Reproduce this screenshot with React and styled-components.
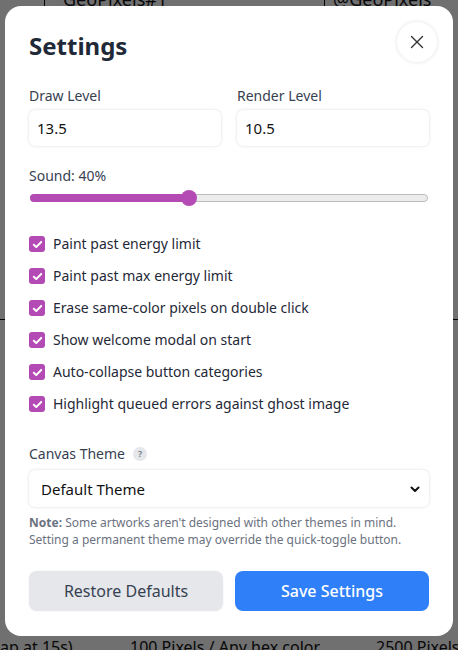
import React, { useState } from "react";
import styled, { createGlobalStyle } from "styled-components";

const GlobalStyle = createGlobalStyle`
*{
  box-sizing:border-box;
  margin:0;
  padding:0;
}
html, body{
  width:100%;
  height:100%;
  overflow:hidden;
  font-family:"Noto Sans", "Open Sans", sans-serif;
}
`

// dimmed page behind the modal
const Page = styled.div`
  width:458px;
  height:650px;
  background:#f3f3f3;
  display:flex;
  flex-direction:column;
  justify-content:space-between;
  color:#111;
`
const PageTop = styled.div`
  display:grid;
  grid-template-columns:45px 280px 1fr;
  height:320px;
  border-bottom:1px solid #000;
`
const PageCell = styled.div`
  border-right:${p => p.$last ? "none" : "1px solid #000"};
  font-size:18px;
  line-height:18px;
  margin-top:-10px;
  padding-left:${p => p.$pad || 10}px;
`
const Swatches = styled.div`
  display:flex;
  flex-direction:column;
  gap:3px;
  margin-top:118px;
`
const Swatch = styled.div`
  height:${p => p.$h}px;
  background:${p => p.$c};
  border:2px solid #1d4fa8;
  border-radius:0 6px 6px 0;
`
const PageBottom = styled.div`
  display:grid;
  grid-template-columns:130px 246px 1fr;
  font-size:16px;
  margin-bottom:-8px;
  white-space:nowrap;
  overflow:hidden;
`

const Overlay = styled.div`
  position:fixed;
  inset:0;
  background:rgba(0,0,0,0.54);
`

const Modal = styled.div`
  position:fixed;
  left:5px;
  top:6px;
  width:448px;
  height:630px;
  background:#fff;
  border-radius:16px;
  padding:24px 24px 25px;
  display:flex;
  flex-direction:column;
`
const Title = styled.h1`
  font-size:24px;
  line-height:32px;
  font-weight:700;
  color:#1f2937;
`
const CloseButton = styled.button`
  position:absolute;
  top:16px;
  right:16px;
  width:40px;
  height:40px;
  border-radius:50%;
  border:none;
  background:#fff;
  box-shadow:0 0 4px rgba(0,0,0,0.12);
  display:flex;
  align-items:center;
  justify-content:center;
  color:#333;
`
const FieldRow = styled.div`
  display:grid;
  grid-template-columns:minmax(0,1fr) minmax(0,1fr);
  gap:16px;
  margin-top:24px;
`
const Field = styled.div`
  display:flex;
  flex-direction:column;
  gap:4px;
  min-width:0;
`
const Label = styled.label`
  font-size:14px;
  line-height:20px;
  color:#374151;
  display:flex;
  align-items:center;
  gap:8px;
`
const Input = styled.input`
  width:100%;
  min-width:0;
  height:36px;
  border:none;
  border-radius:6px;
  box-shadow:0 0 3px rgba(0,0,0,0.15);
  padding:0 8px;
  font-family:inherit;
  font-size:15px;
  color:#111;
  outline:none;
`
const SoundBlock = styled.div`
  margin-top:20px;
  display:flex;
  flex-direction:column;
  gap:4px;
`
const SliderWrap = styled.div`
  height:16px;
  display:flex;
  align-items:center;
  padding:0 1px;
`
const Track = styled.div`
  position:relative;
  width:100%;
  height:8px;
  border-radius:4px;
  background:#ececec;
  border:1px solid #bdbdbd;
`
const Fill = styled.div`
  position:absolute;
  left:-1px;
  top:-1px;
  bottom:-1px;
  background:#b44ab4;
  border-radius:4px 0 0 4px;
`
const Thumb = styled.div`
  position:absolute;
  top:50%;
  width:16px;
  height:16px;
  margin:-8px 0 0 -8px;
  border-radius:50%;
  background:#b44ab4;
`
const CheckList = styled.div`
  margin-top:28px;
  display:flex;
  flex-direction:column;
  gap:12px;
`
const CheckRow = styled.label`
  display:flex;
  align-items:center;
  gap:8px;
  font-size:14px;
  line-height:20px;
  color:#1f2937;
`
const Box = styled.span`
  width:16px;
  height:16px;
  border-radius:3px;
  background:#b44ab4;
  display:flex;
  align-items:center;
  justify-content:center;
  flex-shrink:0;
`
const ThemeBlock = styled.div`
  margin-top:30px;
  display:flex;
  flex-direction:column;
  gap:6px;
`
const Help = styled.span`
  width:14px;
  height:14px;
  border-radius:50%;
  background:#e5e7eb;
  color:#6b7280;
  font-size:9px;
  line-height:14px;
  text-align:center;
  font-weight:600;
`
const SelectBox = styled.div`
  height:37px;
  border-radius:6px;
  box-shadow:0 0 3px rgba(0,0,0,0.15);
  display:flex;
  align-items:center;
  justify-content:space-between;
  padding:0 8px 0 12px;
  font-size:15px;
  color:#111;
`
const Note = styled.p`
  margin-top:7px;
  font-size:12px;
  line-height:17px;
  color:#6b7280;
  b{ font-weight:700; }
`
const Buttons = styled.div`
  margin-top:auto;
  display:grid;
  grid-template-columns:1fr 1fr;
  gap:12px;
`
const Button = styled.button`
  height:40px;
  border:none;
  border-radius:8px;
  font-family:inherit;
  font-size:16px;
  font-weight:${p => p.$primary ? 500 : 400};
  background:${p => p.$primary ? "#2f80f8" : "#e5e7eb"};
  color:${p => p.$primary ? "#fff" : "#374151"};
  box-shadow:${p => p.$primary ? "none" : "0 0 2px rgba(0,0,0,0.08)"};
`

const options = [
  "Paint past energy limit",
  "Paint past max energy limit",
  "Erase same-color pixels on double click",
  "Show welcome modal on start",
  "Auto-collapse button categories",
  "Highlight queued errors against ghost image",
]

const Check = () => (
  <svg width="11" height="11" viewBox="0 0 12 12">
    <path d="M2 6.3l2.6 2.6L10 3.2" fill="none" stroke="#fff" strokeWidth="2.2" strokeLinecap="round" strokeLinejoin="round" />
  </svg>
)

export default function App() {
  const [sound] = useState(40)
  return (
    <>
      <GlobalStyle />
      <Page>
        <PageTop>
          <PageCell $pad={0}>
            <Swatches>
              <Swatch $h={52} $c="#d8890c" />
              <Swatch $h={30} $c="#2a2a2a" />
              <Swatch $h={34} $c="#d6b27c" />
              <Swatch $h={46} $c="#2563c9" />
            </Swatches>
          </PageCell>
          <PageCell $pad={18}>GeoPixels#1</PageCell>
          <PageCell $last $pad={8}>@GeoPixels</PageCell>
        </PageTop>
        <PageBottom>
          <span>ap at 15s)</span>
          <span>100 Pixels / Any hex color</span>
          <span>2500 Pixels /</span>
        </PageBottom>
      </Page>
      <Overlay />
      <Modal>
        <Title>Settings</Title>
        <CloseButton aria-label="Close">
          <svg width="14" height="14" viewBox="0 0 14 14">
            <path d="M1.5 1.5l11 11M12.5 1.5l-11 11" stroke="#333" strokeWidth="1.4" strokeLinecap="round" />
          </svg>
        </CloseButton>
        <FieldRow>
          <Field>
            <Label>Draw Level</Label>
            <Input defaultValue="13.5" />
          </Field>
          <Field>
            <Label>Render Level</Label>
            <Input defaultValue="10.5" />
          </Field>
        </FieldRow>
        <SoundBlock>
          <Label>Sound: {sound}%</Label>
          <SliderWrap>
            <Track>
              <Fill style={{ width: `${sound}%` }} />
              <Thumb style={{ left: `${sound}%` }} />
            </Track>
          </SliderWrap>
        </SoundBlock>
        <CheckList>
          {options.map(o => (
            <CheckRow key={o}>
              <Box><Check /></Box>
              {o}
            </CheckRow>
          ))}
        </CheckList>
        <ThemeBlock>
          <Label>Canvas Theme <Help>?</Help></Label>
          <SelectBox>
            <span>Default Theme</span>
            <svg width="12" height="12" viewBox="0 0 12 12">
              <path d="M2.5 4.5L6 8l3.5-3.5" fill="none" stroke="#111" strokeWidth="2" strokeLinecap="round" strokeLinejoin="round" />
            </svg>
          </SelectBox>
        </ThemeBlock>
        <Note>
          <b>Note:</b> Some artworks aren't designed with other themes in mind. Setting a permanent theme may override the quick-toggle button.
        </Note>
        <Buttons>
          <Button>Restore Defaults</Button>
          <Button $primary>Save Settings</Button>
        </Buttons>
      </Modal>
    </>
  )
}
